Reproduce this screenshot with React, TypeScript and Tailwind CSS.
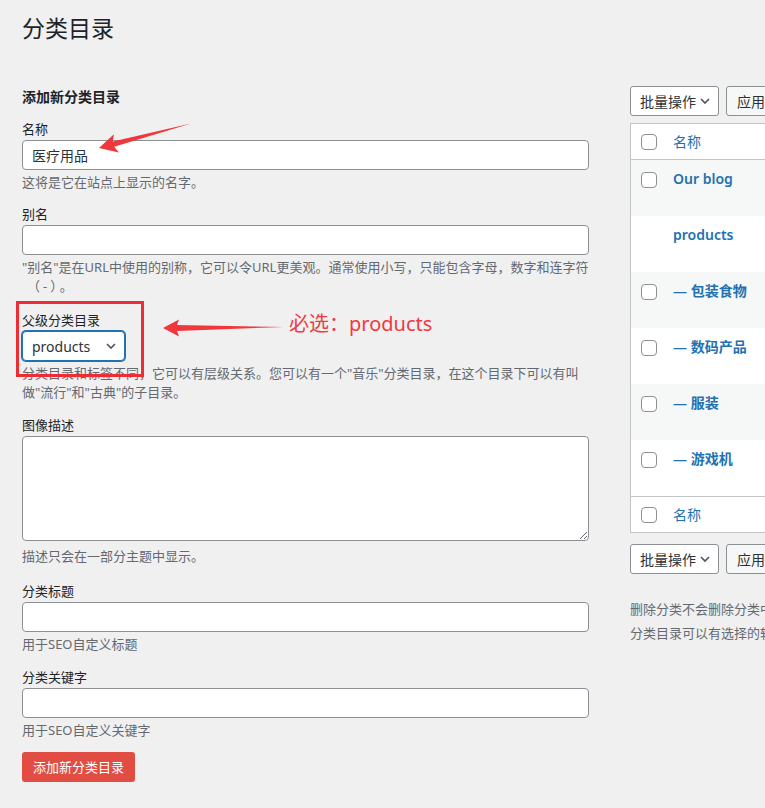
import React from "react";

const helpCls = "text-[13px] leading-[19px] text-[#646970]";
const labelCls = "block text-[13px] leading-[20px] text-[#1d2327]";
const inputCls =
  "block w-full h-[30px] rounded-[4px] border border-[#8c8f94] bg-white";

function Chevron() {
  return (
    <svg width="10" height="6" viewBox="0 0 10 6" className="shrink-0">
      <path d="M1 1l4 4 4-4" fill="none" stroke="#50575e" strokeWidth="1.7" />
    </svg>
  );
}

function Checkbox() {
  return (
    <div className="w-4 h-4 rounded-[4px] border border-[#8c8f94] bg-white" />
  );
}

function BulkRow() {
  return (
    <div className="flex gap-[7px]">
      <div className="w-[89px] h-[30px] shrink-0 rounded-[3px] border border-[#8c8f94] bg-white flex items-center justify-between pl-[9px] pr-[8px] text-[14px] text-[#2c3338]">
        <span>批量操作</span>
        <Chevron />
      </div>
      <div className="w-[60px] h-[30px] shrink-0 rounded-[3px] border border-[#8c8f94] bg-[#f6f7f7] flex items-center pl-[10px] text-[14px] text-[#2c3338]">
        应用
      </div>
    </div>
  );
}

const rows = [
  { name: "Our blog", cb: true, striped: true },
  { name: "products", cb: false, striped: false },
  { name: "— 包装食物", cb: true, striped: true },
  { name: "— 数码产品", cb: true, striped: false },
  { name: "— 服装", cb: true, striped: true },
  { name: "— 游戏机", cb: true, striped: false },
];

export default function App() {
  return (
    <div className="relative w-[765px] h-[808px] overflow-hidden bg-[#f0f0f1] font-['Noto_Sans','Noto_Sans_CJK_SC',sans-serif] text-[#1d2327]">
      <div className="pl-[22px]">
        <h1 className="pt-[13px] text-[23px] leading-[30px] font-normal text-[#1d2327]">
          分类目录
        </h1>

        <div className="mt-[37px] flex gap-[41px]">
          {/* Left column */}
          <div className="w-[567px] shrink-0">
            <h2 className="mt-[7px] text-[14px] leading-[20px] font-bold">
              添加新分类目录
            </h2>

            <div className="mt-[12px]">
              <label className={labelCls}>名称</label>
              <div className={`${inputCls} mt-[1px] flex items-center pl-[9px] text-[14px] text-[#2c3338]`}>
                医疗用品
              </div>
              <p className={`${helpCls} mt-[3px]`}>这将是它在站点上显示的名字。</p>
            </div>

            <div className="mt-[12px]">
              <label className={labelCls}>别名</label>
              <div className={`${inputCls} mt-[1px]`} />
              <p className={`${helpCls} mt-[3px]`}>
                "别名"是在URL中使用的别称，它可以令URL更美观。通常使用小写，只能包含字母，数字和连字符
                <br />
                <span className="pl-[5px] tracking-[3px]">（-）</span>。
              </p>
            </div>

            <div className="mt-[14px]">
              <label className={labelCls}>父级分类目录</label>
              <div className="mt-[1px] w-[103px] h-[30px] rounded-[4px] border border-[#2271b1] shadow-[0_0_0_1px_#2271b1] bg-white flex items-center justify-between pl-[9px] pr-[8px] text-[14px] text-[#2c3338]">
                <span>products</span>
                <Chevron />
              </div>
              <p className={`${helpCls} mt-[3px]`}>
                分类目录和标签不同，它可以有层级关系。您可以有一个"音乐"分类目录，在这个目录下可以有叫
                <br />
                做"流行"和"古典"的子目录。
              </p>
            </div>

            <div className="mt-[13px]">
              <label className={labelCls}>图像描述</label>
              <textarea className="mt-[1px] block w-full h-[105px] rounded-[4px] border border-[#8c8f94] bg-white" />
              <p className={`${helpCls} mt-[6px]`}>描述只会在一部分主题中显示。</p>
            </div>

            <div className="mt-[15px]">
              <label className={labelCls}>分类标题</label>
              <div className={`${inputCls} mt-[1px]`} />
              <p className={`${helpCls} mt-[3px]`}>用于SEO自定义标题</p>
            </div>

            <div className="mt-[13px]">
              <label className={labelCls}>分类关键字</label>
              <div className={`${inputCls} mt-[1px]`} />
              <p className={`${helpCls} mt-[3px]`}>用于SEO自定义关键字</p>
            </div>

            <button className="mt-[12px] h-[30px] px-[11px] rounded-[3px] bg-[#e14d43] text-white text-[13px] leading-[28px]">
              添加新分类目录
            </button>
          </div>

          {/* Right column */}
          <div className="w-[600px] shrink-0 pt-[6px]">
            <BulkRow />

            <div className="mt-[7px] border border-[#c3c4c7] bg-white">
              <div className="h-[36px] flex items-center border-b border-[#c3c4c7]">
                <div className="w-[42px] pl-[10px]">
                  <Checkbox />
                </div>
                <span className="text-[14px] text-[#2271b1]">名称</span>
              </div>
              {rows.map((r, i) => (
                <div
                  key={i}
                  className={`h-[56px] flex items-start ${r.striped ? "bg-[#f6f7f7]" : "bg-white"}`}
                >
                  <div className="w-[42px] pl-[10px] pt-[12px]">
                    {r.cb ? <Checkbox /> : null}
                  </div>
                  <span className="pt-[9px] text-[14px] leading-[20px] font-semibold text-[#2271b1]">
                    {r.name}
                  </span>
                </div>
              ))}
              <div className="h-[36px] flex items-center border-t border-[#c3c4c7]">
                <div className="w-[42px] pl-[10px]">
                  <Checkbox />
                </div>
                <span className="text-[14px] text-[#2271b1]">名称</span>
              </div>
            </div>

            <div className="mt-[11px]">
              <BulkRow />
            </div>

            <div className="mt-[23px] text-[13px] leading-[24px] text-[#646970] whitespace-nowrap">
              <p>删除分类不会删除分类中的文章。然而，仅属于被删除分类的文章将被指派给未分类分类。</p>
              <p>分类目录可以有选择的转换为标签，请使用分类目录到标签转换器。</p>
            </div>
          </div>
        </div>
      </div>

      {/* Annotations */}
      <div className="absolute left-[16px] top-[301px] w-[128px] h-[76px] border-[3px] border-[#ed2d33] pointer-events-none" />
      <svg
        className="absolute left-0 top-0 pointer-events-none"
        width="765"
        height="808"
        viewBox="0 0 765 808"
      >
        <polygon
          points="99,148 113.9,134.2 112.8,141.4 191,123.5 114.2,146.8 118.9,152.6"
          fill="#f0373c"
        />
        <polygon
          points="163,328 179,319.5 177,325 284,327 177,331 179,336.5"
          fill="#f0373c"
        />
      </svg>
      <div className="absolute left-[289px] top-[310px] text-[20px] leading-[28px] text-[#f03a3f] whitespace-nowrap">
        必选：products
      </div>
    </div>
  );
}
